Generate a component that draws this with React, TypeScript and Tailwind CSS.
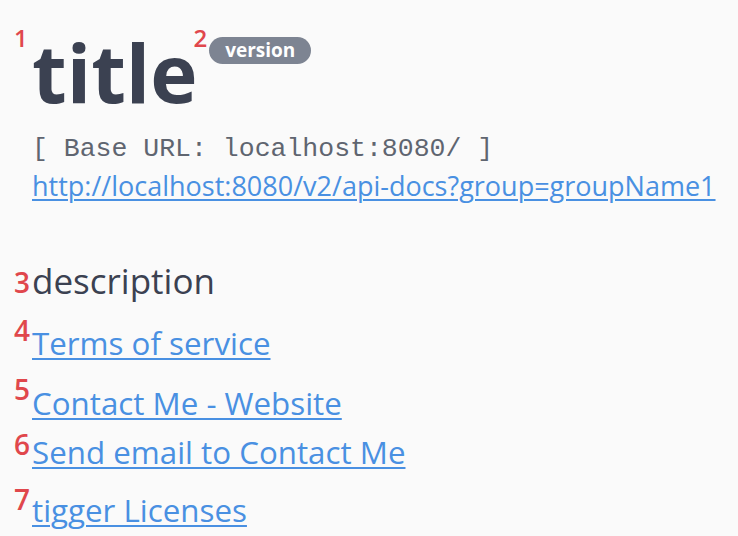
export default function App() {
  const num = "w-[18px] shrink-0 text-[28px] leading-none font-semibold text-[#e0474c] font-['Open_Sans',sans-serif]"
  const link =
    "text-[31.3px] leading-none text-[#4990e2] underline decoration-2 underline-offset-[3px] font-['Open_Sans',sans-serif]"

  return (
    <div className="min-h-screen w-full bg-[#fafafa] pl-[14px] pt-[26px] font-['Open_Sans',sans-serif]">
      {/* title + version */}
      <div className="flex items-start">
        <span className="w-[18px] shrink-0 text-[24px] leading-none font-semibold text-[#e0474c]">1</span>
        <h1 className="mt-[6px] text-[80px] leading-none font-bold text-[#3b4151]">title</h1>
        <span className="-ml-[4px] text-[24px] leading-none font-semibold text-[#e0474c]">2</span>
        <span className="mt-[11px] ml-[2px] flex h-[27px] w-[102px] items-center justify-center rounded-full bg-[#7d8492] text-[19px] font-bold text-white">
          version
        </span>
      </div>

      <div className="ml-[18px]">
        <pre className="mt-[24px] text-[26.5px] leading-none text-[#5f6570] font-['Liberation_Mono',monospace]">
          [ Base URL: localhost:8080/ ]
        </pre>
        <a
          href="#"
          className="mt-[9px] inline-block text-[27px] leading-none text-[#4990e2] underline decoration-2 underline-offset-[3px]"
        >
          http://localhost:8080/v2/api-docs?group=groupName1
        </a>
      </div>

      <div className="mt-[61px] flex items-start">
        <span className={`${num} mt-[5px]`}>3</span>
        <p className="text-[35px] leading-none text-[#3b4151]">description</p>
      </div>

      <div className="mt-[18px] flex items-start">
        <span className={num}>4</span>
        <a href="#" className={`${link} mt-[12px]`}>Terms of service</a>
      </div>

      <div className="mt-[16px] flex items-start">
        <span className={num}>5</span>
        <a href="#" className={`${link} mt-[13px]`}>Contact Me - Website</a>
      </div>

      <div className="mt-[11px] flex items-start">
        <span className={num}>6</span>
        <a href="#" className={`${link} mt-[7px]`}>Send email to Contact Me</a>
      </div>

      <div className="mt-[17px] flex items-start">
        <span className={num}>7</span>
        <a href="#" className={`${link} mt-[10px]`}>tigger Licenses</a>
      </div>
    </div>
  )
}
